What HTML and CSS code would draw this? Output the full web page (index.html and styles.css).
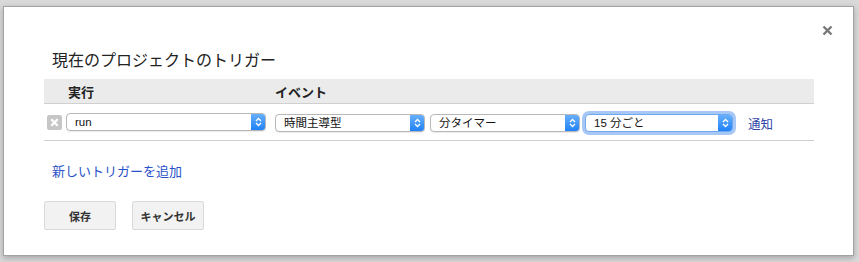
FILE: index.html
```html
<!DOCTYPE html>
<html lang="ja">
<head>
    <meta charset="UTF-8">
    <title>トリガー</title>
    <link rel="stylesheet" href="styles.css">
</head>
<body>
    <div class="dialog">
        <a href="#" class="close" title="閉じる">
            <svg width="11" height="11" viewBox="0 0 11 11"><path d="M1.5 1.5 L9.5 9.5 M9.5 1.5 L1.5 9.5" stroke="#777" stroke-width="2.4" fill="none"/></svg>
        </a>
        <h1 class="title">現在のプロジェクトのトリガー</h1>

        <div class="table">
            <div class="head">
                <div class="col-run">実行</div>
                <div class="col-event">イベント</div>
            </div>
            <div class="row">
                <span class="remove">
                    <svg width="15" height="15" viewBox="0 0 15 15"><rect width="15" height="15" rx="2" fill="#c6c6c6"/><path d="M4.3 4.3 L10.7 10.7 M10.7 4.3 L4.3 10.7" stroke="#fff" stroke-width="2.3"/></svg>
                </span>
                <div class="select w-run">
                    <span class="val">run</span>
                    <span class="step"><svg width="7" height="10" viewBox="0 0 7 10"><path d="M1 4 L3.5 1.5 L6 4 M1 6 L3.5 8.5 L6 6" stroke="#fff" stroke-width="1.3" fill="none"/></svg></span>
                </div>
                <div class="select w-ev first">
                    <span class="val">時間主導型</span>
                    <span class="step"><svg width="7" height="10" viewBox="0 0 7 10"><path d="M1 4 L3.5 1.5 L6 4 M1 6 L3.5 8.5 L6 6" stroke="#fff" stroke-width="1.3" fill="none"/></svg></span>
                </div>
                <div class="select w-ev">
                    <span class="val">分タイマー</span>
                    <span class="step"><svg width="7" height="10" viewBox="0 0 7 10"><path d="M1 4 L3.5 1.5 L6 4 M1 6 L3.5 8.5 L6 6" stroke="#fff" stroke-width="1.3" fill="none"/></svg></span>
                </div>
                <div class="select w-min focus">
                    <span class="val">15 分ごと</span>
                    <span class="step"><svg width="7" height="10" viewBox="0 0 7 10"><path d="M1 4 L3.5 1.5 L6 4 M1 6 L3.5 8.5 L6 6" stroke="#fff" stroke-width="1.3" fill="none"/></svg></span>
                </div>
                <a href="#" class="notify">通知</a>
            </div>
        </div>

        <a href="#" class="add">新しいトリガーを追加</a>

        <div class="buttons">
            <button class="btn">保存</button>
            <button class="btn">キャンセル</button>
        </div>
    </div>
</body>
</html>
```

FILE: styles.css
```css
* {
    margin: 0;
    padding: 0;
    box-sizing: border-box;
}

body {
    background-color: #d9d9d9;
    font-family: "Liberation Sans", "Noto Sans CJK JP", sans-serif;
    color: #222;
    padding: 6px 5px 6px 3px;
}

.dialog {
    position: relative;
    width: 851px;
    height: 250px;
    background-color: #fff;
    border: 1px solid #a3a3a3;
    box-shadow: 0 2px 6px rgba(0, 0, 0, 0.25);
    padding: 42px 39px 0 40px;
}

.close {
    position: absolute;
    top: 18px;
    right: 20px;
    display: block;
    line-height: 0;
}

.title {
    font-family: "Noto Sans CJK JP", sans-serif;
    font-size: 16px;
    font-weight: normal;
    line-height: 20px;
    padding-left: 8px;
    color: #222;
}

.table {
    margin-top: 10px;
    width: 770px;
}

.head {
    display: flex;
    height: 25px;
    align-items: center;
    background-color: #ebebeb;
    border-bottom: 1px solid #d0d0d0;
    font-family: "Noto Sans CJK JP", sans-serif;
    font-size: 13px;
    font-weight: bold;
    color: #222;
}

.col-run {
    width: 231px;
    padding-left: 24px;
}

.row {
    display: flex;
    align-items: center;
    height: 37px;
    padding: 0 0 1px 3px;
    border-bottom: 1px solid #cfcfcf;
}

.remove {
    display: block;
    line-height: 0;
    margin-right: 4px;
    margin-top: 1px;
}

.select {
    display: flex;
    align-items: center;
    height: 18px;
    border: 1px solid #b8b8b8;
    border-radius: 4px;
    background-color: #fff;
    box-shadow: 0 1px 1px rgba(0, 0, 0, 0.08);
    font-family: "Liberation Sans", "Noto Sans CJK JP", sans-serif;
    font-size: 11.5px;
    color: #111;
    overflow: hidden;
}

.select .val {
    flex: 1;
    padding-left: 8px;
    line-height: 16px;
}

.select .step {
    width: 15px;
    height: 18px;
    margin: -1px -1px -1px 0;
    display: flex;
    align-items: center;
    justify-content: center;
    background: linear-gradient(#6bb2fb, #1c7ff6);
    border-radius: 0 4px 4px 0;
}

.w-run {
    width: 200px;
}

.w-ev {
    width: 150px;
    margin-left: 5px;
    margin-top: 3px;
}

.w-ev.first {
    margin-left: 9px;
}

.w-min {
    width: 148px;
    margin-left: 5px;
    margin-top: 3px;
}

.focus {
    border-color: #6fa8ee;
    box-shadow: 0 0 0 3px rgba(120, 170, 240, 0.65);
}

.notify {
    margin-left: 15px;
    margin-top: 3px;
    font-family: "Noto Sans CJK JP", sans-serif;
    font-size: 12.5px;
    color: #3246a8;
    text-decoration: none;
}

.add {
    display: block;
    margin-top: 21px;
    padding-left: 8px;
    font-family: "Noto Sans CJK JP", sans-serif;
    font-size: 13px;
    line-height: 18px;
    color: #2a52c8;
    text-decoration: none;
}

.buttons {
    display: flex;
    gap: 16px;
    margin-top: 21px;
}

.btn {
    width: 72px;
    height: 29px;
    background-color: #f2f2f2;
    border: 1px solid #dadada;
    border-radius: 2px;
    font-family: "Noto Sans CJK JP", sans-serif;
    font-size: 11px;
    font-weight: bold;
    color: #333;
}
```
